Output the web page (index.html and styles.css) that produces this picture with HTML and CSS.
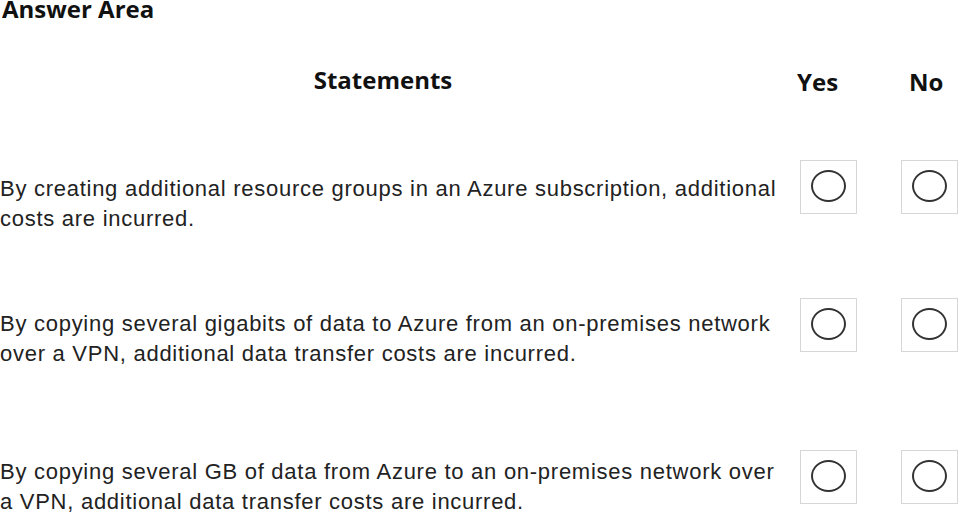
FILE: index.html
```html
<!DOCTYPE html>
<html lang="en">
<head>
    <meta charset="UTF-8">
    <meta name="viewport" content="width=device-width, initial-scale=1.0">
    <title>Answer Area</title>
    <link rel="stylesheet" href="styles.css">
</head>
<body>
    <h1 class="title">Answer Area</h1>

    <div class="head">
        <div class="head-statements">Statements</div>
        <div class="head-yes">Yes</div>
        <div class="head-no">No</div>
    </div>

    <div class="row row-1">
        <div class="statement">By creating additional resource groups in an Azure subscription, additional<br>costs are incurred.</div>
        <div class="choice"><span class="radio"></span></div>
        <div class="choice"><span class="radio"></span></div>
    </div>

    <div class="row row-2">
        <div class="statement">By copying several gigabits of data to Azure from an on-premises network<br>over a VPN, additional data transfer costs are incurred.</div>
        <div class="choice"><span class="radio"></span></div>
        <div class="choice"><span class="radio"></span></div>
    </div>

    <div class="row row-3">
        <div class="statement">By copying several GB of data from Azure to an on-premises network over<br>a VPN, additional data transfer costs are incurred.</div>
        <div class="choice"><span class="radio"></span></div>
        <div class="choice"><span class="radio"></span></div>
    </div>
</body>
</html>
```

FILE: styles.css
```css
body {
    margin: 0;
    padding: 0;
    background: #fff;
    font-family: "Liberation Sans", Arial, sans-serif;
    color: #222;
}
.title {
    margin: 0;
    padding-left: 2px;
    font-family: "Open Sans", sans-serif;
    font-weight: 700;
    font-size: 24px;
    line-height: 18px;
    color: #111;
}
.head {
    display: grid;
    grid-template-columns: 756px 57px 57px;
    column-gap: 44px;
    margin-top: 49px;
    font-family: "Open Sans", sans-serif;
    font-weight: 700;
    font-size: 24px;
    line-height: 26px;
    color: #111;
    white-space: nowrap;
}
.head-statements {
    text-align: center;
    padding-left: 10px;
}
.head-yes {
    margin-left: -3px;
    padding-top: 2px;
}
.head-no {
    margin-left: 8px;
    padding-top: 2px;
}
.row {
    display: grid;
    grid-template-columns: 756px 57px 57px;
    column-gap: 44px;
    align-items: start;
}
.row-1 {
    margin-top: 65px;
}
.row-1 .statement {
    padding-top: 14px;
}
.row-2 {
    margin-top: 64px;
}
.row-2 .statement {
    padding-top: 11px;
}
.row-3 {
    margin-top: 81px;
}
.row-3 .statement {
    padding-top: 7px;
}
.statement {
    font-size: 22px;
    line-height: 30px;
    letter-spacing: 0.73px;
    white-space: nowrap;
}
.choice {
    box-sizing: border-box;
    height: 54px;
    border: 1px solid #d6d6d6;
    display: flex;
    align-items: center;
    justify-content: center;
}
.radio {
    box-sizing: border-box;
    width: 35px;
    height: 32px;
    border: 2px solid #333;
    border-radius: 50%;
    margin-top: -3px;
}
```
